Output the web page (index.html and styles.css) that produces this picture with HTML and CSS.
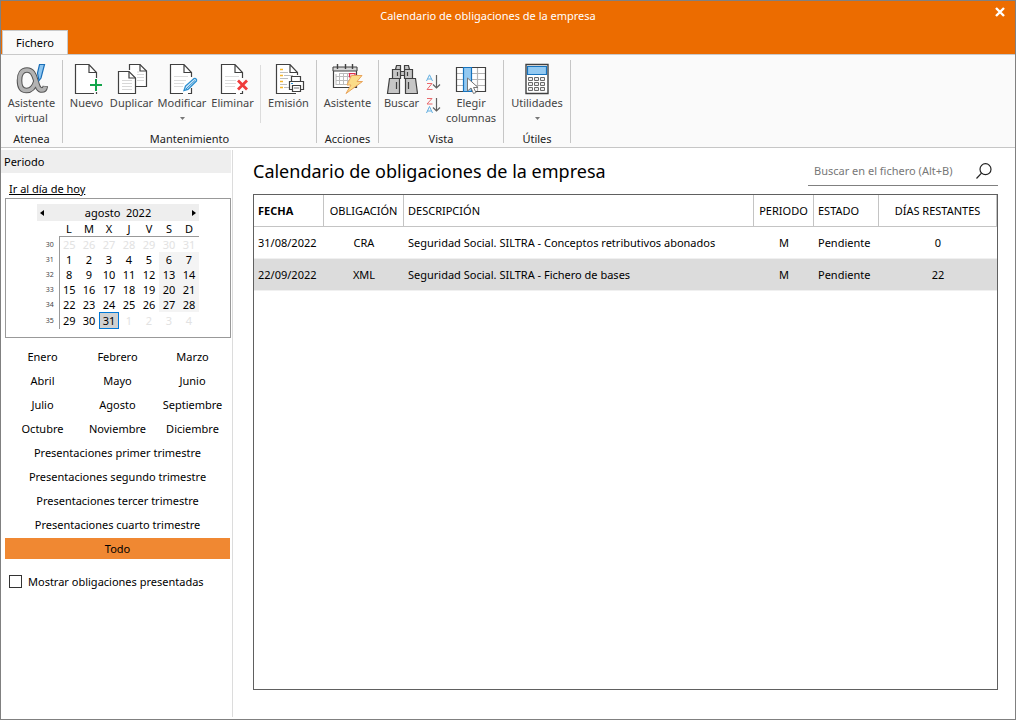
FILE: index.html
```html
<!DOCTYPE html>
<html lang="es">
<head>
<meta charset="utf-8">
<title>Calendario de obligaciones de la empresa</title>
<link rel="stylesheet" href="styles.css">
</head>
<body>
<div class="window">
  <header class="titlebar">
    <div class="titlebar-text">Calendario de obligaciones de la empresa</div>
    <button class="close" type="button" aria-label="Cerrar">
      <svg width="10" height="10" viewBox="0 0 10 10"><path d="M1 1L9 9M9 1L1 9" stroke="#fff" stroke-width="2.4"/></svg>
    </button>
    <button class="tab" type="button">Fichero</button>
  </header>

  <div class="ribbon">
    <section class="group group-narrow">
      <div class="tools">
        <button class="tool tool-fill" type="button">
          <svg width="32" height="32" viewBox="0 0 32 32" fill="none">
            <path d="M20 18C18 25 15 27.500 10.500 27.500C5.500 27.500 3.500 24 3.500 17.500C3.500 11 6 7 11 7C16 7 18 11 20 18C21.500 24 22.500 27 26 27C28 27 29 25.500 29.300 23" stroke="#555" stroke-width="5.600"/>
            <path d="M20 18C18 25 15 27.500 10.500 27.500C5.500 27.500 3.500 24 3.500 17.500C3.500 11 6 7 11 7C16 7 18 11 20 18C21.500 24 22.500 27 26 27C28 27 29 25.500 29.300 23.500" stroke="#b3b3b3" stroke-width="3.600"/>
            <path d="M23.500 1.500H28.500L25 15L23 17.500L21.500 10Z" fill="#8cc5f0" stroke="#1b6fb8" stroke-width="1.200"/>
          </svg>
          <span>Asistente<br>virtual</span>
        </button>
      </div>
      <h2 class="group-name">Atenea</h2>
    </section>

    <section class="group group-edit">
      <div class="tools">
        <button class="tool" type="button">
          <svg width="32" height="32" viewBox="0 0 32 32" fill="none">
            <path d="M22 30.500H4.500V1.500H18.500L25.500 9.500V19" fill="#fff"/>
            <path d="M23 30.500H4.500V1.500H18L25.500 9.500V15M18 1.500V9.500H25.500M25.500 29V31" stroke="#404040" stroke-width="1.200"/>
            <path d="M25 16V28M19 22H31" stroke="#12a54a" stroke-width="2"/>
          </svg>
          <span>Nuevo</span>
        </button>
        <button class="tool" type="button">
          <svg width="32" height="32" viewBox="0 0 32 32">
            <path d="M13.500 7V1.500H24L30.500 8V23.500H20" fill="#fff" stroke="#404040" stroke-width="1.200"/>
            <path d="M24 1.500V8H30.500" fill="none" stroke="#404040" stroke-width="1.200"/>
            <path d="M21 11.500H28M21 14.500H28M21 17.500H28M21 9H23" stroke="#d8d8d8"/>
            <path d="M2.500 8.500H13L19.500 15V30.500H2.500Z" fill="#fff" stroke="#404040" stroke-width="1.200"/>
            <path d="M13 8.500V15H19.500" fill="none" stroke="#404040" stroke-width="1.200"/>
            <path d="M6 17.500H16M6 20.500H16M6 23.500H16M6 26.500H16" stroke="#d8d8d8"/>
          </svg>
          <span>Duplicar</span>
        </button>
        <button class="tool tool-wide" type="button">
          <svg width="32" height="32" viewBox="0 0 32 32" fill="none">
            <path d="M4.500 1.500H18L25.500 9.500V30.500H4.500Z" fill="#fff"/>
            <path d="M17 30.500H4.500V1.500H18L25.500 9.500V14M18 1.500V9.500H25.500M25.500 25V30.500H22" stroke="#404040" stroke-width="1.200"/>
            <path d="M8 13.500H22M8 17.500H20M8 20.500H18M8 23.500H17" stroke="#dcdcdc"/>
            <path d="M18 27.500L19.500 23L28 15.500Q29.500 15 30.500 16.500V18L22 26.500Z" fill="#cfe6f7" stroke="#2b8fd0" stroke-width="1.300"/>
            <path d="M20 26L29 17.500" stroke="#2b8fd0"/>
          </svg>
          <span>Modificar</span>
          <svg class="caret" width="5" height="3" viewBox="0 0 5 3"><path d="M0 0H5L2.500 3Z" fill="#777"/></svg>
        </button>
        <button class="tool" type="button">
          <svg width="32" height="32" viewBox="0 0 32 32" fill="none">
            <path d="M4.500 1.500H18L25.500 9.500V30.500H4.500Z" fill="#fff"/>
            <path d="M19 30.500H4.500V1.500H18L25.500 9.500V15M18 1.500V9.500H25.500M25.500 28V30.500H23" stroke="#404040" stroke-width="1.200"/>
            <path d="M8 13.500H22M8 17.500H19M8 20.500H19M8 23.500H18" stroke="#dcdcdc"/>
            <path d="M21 17.500L30 26.500M30 17.500L21 26.500" stroke="#ef3b3b" stroke-width="2.800"/>
          </svg>
          <span>Eliminar</span>
        </button>
        <span class="divider"></span>
        <button class="tool" type="button">
          <svg width="32" height="32" viewBox="0 0 32 32" fill="none">
            <path d="M3.500 1.500H16.500L24.500 9.500V30.500H3.500Z" fill="#fff"/>
            <path d="M18 30.500H3.500V1.500H17L24.500 9.500V12M17 1.500V9.500H24.500M18 30.500H23" stroke="#404040" stroke-width="1.200"/>
            <path d="M7 6.500H10M7 12.500H10M7 18.500H10M7 24.500H10" stroke="#f5b52a" stroke-width="1.400"/>
            <path d="M7 9.500H15M11 12.500H20M7 15.500H15M7 21.500H14M11 24.500H16" stroke="#bdbdbd"/>
            <path d="M18.500 18V13.500H27.500V18" fill="#fff" stroke="#404040" stroke-width="1.200"/>
            <path d="M16.500 18.500H30.500V26.500H16.500Z" fill="#fff" stroke="#404040" stroke-width="1.200"/>
            <path d="M19.500 22.500H27.500V28.500H19.500Z" fill="#fff" stroke="#404040" stroke-width="1.200"/>
            <path d="M21 25H26" stroke="#777"/><path d="M18 20.500H20" stroke="#2b8fd0"/>
          </svg>
          <span>Emisión</span>
        </button>
      </div>
      <h2 class="group-name">Mantenimiento</h2>
    </section>

    <section class="group group-narrow">
      <div class="tools">
        <button class="tool tool-fill" type="button">
          <svg width="32" height="32" viewBox="0 0 32 32" fill="none">
            <path d="M1.500 4.500H24.500V24.500H1.500Z" fill="#fff" stroke="#404040" stroke-width="1.200"/>
            <path d="M1 4H25V8H1Z" fill="#d6d6d6" stroke="#404040"/>
            <path d="M5.500 1V6M13.500 1V6M20.500 1V6" stroke="#404040" stroke-width="1.400"/>
            <path d="M4 13.500H22M4 17.500H22M4 21.500H18M7.500 11V22M11.500 11V22M15.500 11V22M4 11V22M7 10.500H17" stroke="#bcbcbc"/>
            <path d="M17.500 10.500H23V14H17.500Z" fill="#f7cdd4" stroke="#df2c4c" stroke-width="1.200"/>
            <path d="M19.500 12.500H30L25 18.500H30.500L14 30.500L19 22H15Z" fill="#fbdc89" stroke="#e9a45b"/>
          </svg>
          <span>Asistente</span>
        </button>
      </div>
      <h2 class="group-name">Acciones</h2>
    </section>

    <section class="group group-view">
      <div class="tools">
        <button class="tool" type="button">
          <svg width="32" height="32" viewBox="0 0 32 32" fill="#c6c6c6" stroke="#404040" stroke-width="1.200">
            <path d="M10.500 2.500H14.500V6.500H9.500ZM18.500 2.500H22.500L23.500 6.500H18.500ZM14.500 8.500H18.500V12.500H14.500ZM6.500 6.500H14.500V15.500H6.500ZM18.500 6.500H26.500V15.500H18.500Z"/>
            <path d="M3.500 15.500H13.500V30.500H1.500ZM19.500 15.500H29.500L31.500 30.500H19.500Z"/>
            <path d="M11.500 9V13M21.500 9V13M10.500 19V26M22.500 19V26"/>
          </svg>
          <span>Buscar</span>
        </button>
        <div class="sorters">
          <button class="sorter" type="button" aria-label="Orden ascendente">
            <svg width="16" height="17" viewBox="0 0 16 17" fill="none">
              <path d="M1.500 7L4.500 .8L7.500 7M2.500 5H6.500" stroke="#61aee0"/>
              <path d="M2 9.500H7L2 15.500H7.500" stroke="#e9696d"/>
              <path d="M11.500 1V14M8 10.500L11.500 14L15 10.500" stroke="#606060" stroke-width="1.200"/>
            </svg>
          </button>
          <button class="sorter" type="button" aria-label="Orden descendente">
            <svg width="16" height="17" viewBox="0 0 16 17" fill="none">
              <path d="M2 1.500H7L2 7H7.500" stroke="#e9696d"/>
              <path d="M1.500 16L4.500 9.500L7.500 16M2.500 14H6.500" stroke="#61aee0"/>
              <path d="M11.500 1V14M8 10.500L11.500 14L15 10.500" stroke="#606060" stroke-width="1.200"/>
            </svg>
          </button>
        </div>
        <button class="tool" type="button">
          <svg width="32" height="32" viewBox="0 0 32 32" fill="none">
            <path d="M1.500 4.500H30.500V28.500H1.500Z" fill="#fff"/>
            <path d="M2 10.500H30M2 16.500H30M2 22.500H30M22.500 5V28" stroke="#b5b5b5" stroke-width="1.200"/>
            <path d="M1.500 4.500H30.500V28.500H1.500Z" stroke="#404040" stroke-width="1.200"/>
            <path d="M8.500 4.500H16.500V28.500H8.500Z" fill="#93c9f1" stroke="#1673be" stroke-width="1.200"/>
            <path d="M12.500 15V28L16 25L18.500 30.500L21 29.500L18.500 24.500H23Z" fill="#fff" stroke="#777"/>
          </svg>
          <span>Elegir<br>columnas</span>
        </button>
      </div>
      <h2 class="group-name">Vista</h2>
    </section>

    <section class="group group-utils">
      <div class="tools">
        <button class="tool tool-fill" type="button">
          <svg width="32" height="32" viewBox="0 0 32 32" fill="none">
            <path d="M5 1.500H27V30.500H5Z" fill="#fff" stroke="#404040" stroke-width="1.400"/>
            <path d="M6.500 3.500H25.500V11.500H6.500Z" fill="#93c9f1" stroke="#1673be" stroke-width="1.200"/>
            <path d="M7.500 14.500H11.500V17.500H7.500ZM13.500 14.500H17.500V17.500H13.500ZM19.500 14.500H23.500V17.500H19.500ZM7.500 19.500H11.500V22.500H7.500ZM13.500 19.500H17.500V22.500H13.500ZM19.500 19.500H23.500V22.500H19.500ZM7.500 24.500H11.500V27.500H7.500ZM13.500 24.500H17.500V27.500H13.500ZM19.500 24.500H23.500V27.500H19.500Z" fill="#eee" stroke="#6a6a6a"/>
          </svg>
          <span>Utilidades</span>
          <svg class="caret" width="5" height="3" viewBox="0 0 5 3"><path d="M0 0H5L2.500 3Z" fill="#777"/></svg>
        </button>
      </div>
      <h2 class="group-name">Útiles</h2>
    </section>
  </div>

  <div class="content">
    <aside class="sidebar">
      <h2 class="sidebar-title">Periodo</h2>
      <a class="today-link" href="#hoy">Ir al día de hoy</a>
      <div class="calendar">
        <div class="calendar-head">
          <button type="button" aria-label="Mes anterior"><svg width="4" height="6" viewBox="0 0 4 6"><path d="M4 0V6L0 3Z"/></svg></button>
          <span>agosto&nbsp; 2022</span>
          <button type="button" aria-label="Mes siguiente"><svg width="4" height="6" viewBox="0 0 4 6"><path d="M0 0V6L4 3Z"/></svg></button>
        </div>
        <table class="days">
          <thead><tr><td></td><th>L</th><th>M</th><th>X</th><th>J</th><th>V</th><th>S</th><th>D</th></tr></thead>
          <tbody>
            <tr class="other"><th>30</th><td>25</td><td>26</td><td>27</td><td>28</td><td>29</td><td>30</td><td>31</td></tr>
            <tr><th>31</th><td>1</td><td>2</td><td>3</td><td>4</td><td>5</td><td class="weekend">6</td><td class="weekend">7</td></tr>
            <tr><th>32</th><td>8</td><td>9</td><td>10</td><td>11</td><td>12</td><td class="weekend">13</td><td class="weekend">14</td></tr>
            <tr><th>33</th><td>15</td><td>16</td><td>17</td><td>18</td><td>19</td><td class="weekend">20</td><td class="weekend">21</td></tr>
            <tr><th>34</th><td>22</td><td>23</td><td>24</td><td>25</td><td>26</td><td class="weekend">27</td><td class="weekend">28</td></tr>
            <tr class="last"><th>35</th><td>29</td><td>30</td><td class="selected">31</td><td class="faded">1</td><td class="faded">2</td><td class="faded">3</td><td class="faded">4</td></tr>
          </tbody>
        </table>
      </div>
      <div class="periods">
        <button type="button">Enero</button><button type="button">Febrero</button><button type="button">Marzo</button>
        <button type="button">Abril</button><button type="button">Mayo</button><button type="button">Junio</button>
        <button type="button">Julio</button><button type="button">Agosto</button><button type="button">Septiembre</button>
        <button type="button">Octubre</button><button type="button">Noviembre</button><button type="button">Diciembre</button>
        <button class="full" type="button">Presentaciones primer trimestre</button>
        <button class="full" type="button">Presentaciones segundo trimestre</button>
        <button class="full" type="button">Presentaciones tercer trimestre</button>
        <button class="full" type="button">Presentaciones cuarto trimestre</button>
        <button class="full active" type="button">Todo</button>
      </div>
      <label class="check"><input type="checkbox">Mostrar obligaciones presentadas</label>
    </aside>

    <main class="main">
      <div class="main-head">
        <h1>Calendario de obligaciones de la empresa</h1>
        <div class="search">
          <input type="text" placeholder="Buscar en el fichero (Alt+B)" aria-label="Buscar en el fichero">
          <button type="button" aria-label="Buscar">
            <svg width="16" height="16" viewBox="0 0 16 16" fill="none" stroke="#222" stroke-width="1.200"><circle cx="9.500" cy="6.200" r="5.500"/><path d="M5.500 10.200L.5 15.500"/></svg>
          </button>
        </div>
      </div>
      <div class="grid">
        <table class="records">
          <colgroup><col class="c-date"><col class="c-type"><col><col class="c-period"><col class="c-state"><col class="c-left"></colgroup>
          <thead><tr><th class="sorted">FECHA</th><th class="mid">OBLIGACIÓN</th><th>DESCRIPCIÓN</th><th class="mid">PERIODO</th><th>ESTADO</th><th class="mid">DÍAS RESTANTES</th></tr></thead>
          <tbody>
            <tr><td>31/08/2022</td><td class="mid">CRA</td><td>Seguridad Social. SILTRA - Conceptos retributivos abonados</td><td class="mid">M</td><td>Pendiente</td><td class="mid">0</td></tr>
            <tr class="current"><td>22/09/2022</td><td class="mid">XML</td><td>Seguridad Social. SILTRA - Fichero de bases</td><td class="mid">M</td><td>Pendiente</td><td class="mid">22</td></tr>
          </tbody>
        </table>
      </div>
    </main>
  </div>
</div>
</body>
</html>
```

FILE: styles.css
```css
* { box-sizing: border-box; }

body {
  margin: 0;
  font: 11px/15px "Noto Sans", "Open Sans", sans-serif;
  color: #000;
  background: #fff;
}

button, input {
  font: inherit;
  color: inherit;
  margin: 0;
  padding: 0;
  border: 0;
  background: none;
}

h1, h2 { margin: 0; font-weight: 400; font-size: inherit; }

svg { display: block; }

.window {
  display: flex;
  flex-direction: column;
  min-height: 100vh;
  border: 1px solid #808080;
}

/* Title bar and tab */
.titlebar {
  display: grid;
  grid-template-columns: 1fr 30px;
  grid-template-rows: 29px 24px;
  background: #ec6c00;
}
.titlebar-text { padding-right: 10px; line-height: 30px; text-align: center; color: #fff; }
.close { display: grid; place-items: center; height: 22px; }
.tab {
  grid-column: 1 / -1;
  justify-self: start;
  width: 66px;
  margin-left: 1px;
  background: #fafafa;
  border: 1px solid #c9c9c9;
  border-bottom: 0;
}

/* Ribbon */
.ribbon {
  display: flex;
  height: 94px;
  padding: 5px 0 4px;
  background: #fafafa;
  border-top: 1px solid #c9c9c9;
  border-bottom: 1px solid #c6c6c6;
}
.group {
  display: flex;
  flex-direction: column;
  justify-content: space-between;
  border-right: 1px solid #c6c6c6;
}
.group-narrow { width: 62px; }
.group-edit { width: 254px; }
.group-view { width: 125px; }
.group-utils { width: 67px; }
.group-name { margin-bottom: -3px; text-align: center; color: #222; }
.tools { display: flex; justify-content: center; padding-top: 3px; }
.group-edit .tools { padding-right: 4px; }
.group-view .tools { justify-content: flex-start; }
.tool {
  display: flex;
  flex-direction: column;
  align-items: center;
  min-width: 45px;
  color: #444;
}
.tool-wide { min-width: 56px; }
.tool-fill { flex: 1; }
.caret { margin-top: 7px; }
.divider { width: 1px; height: 58px; margin: 2px 5px 0; background: #dcdcdc; }
.sorters { display: flex; flex-direction: column; gap: 6px; padding: 11px 5px 0 1px; }

/* Page body */
.content { display: flex; flex: 1; padding: 2px 0; }

.sidebar {
  flex: none;
  width: 232px;
  border-right: 1px solid #dcdcdc;
}
.sidebar-title { height: 23px; margin-right: 1px; padding-left: 3px; line-height: 23px; background: #eee; }
.today-link { display: block; width: fit-content; margin: 8px 8px 2px; color: #000; }

.calendar {
  height: 140px;
  margin: 0 1px 0 4px;
  padding: 5px 31px;
  border: 1px solid #999;
}
.calendar-head { display: flex; justify-content: space-between; align-items: center; height: 17px; padding: 0 3px; background: #eee; }
.days { width: 100%; table-layout: fixed; border-collapse: collapse; text-align: center; }
.days th, .days td { width: 20px; height: 15px; padding: 0; font-weight: 400; line-height: 15px; }
.days tr > :first-child { width: 22px; }
.days thead th { border-bottom: 1px solid #999; }
.days tbody th { padding-left: 4px; font-size: 7px; color: #444; border-right: 1px solid #999; }
.days .other td, .days .faded { color: #e2e2e2; }
.days .weekend { background: #f4f4f4; }
.days .last > * { height: 17px; }
.days .selected { background: #d0d0d0; outline: 1px solid #0078d7; outline-offset: -1px; }

.periods { display: grid; grid-template-columns: repeat(3, 1fr); row-gap: 3px; margin: 8px 2px 0 4px; }
.periods button { height: 21px; }
.periods .full { grid-column: 1 / -1; }
.periods .active { background: #f08832; }

.check { display: flex; align-items: center; gap: 6px; margin: 15px 8px; }
.check input { appearance: none; width: 13px; height: 13px; border: 1px solid #333; background: #fff; }

/* Main area */
.main { display: flex; flex: 1; flex-direction: column; min-width: 0; padding: 0 17px 27px 20px; }
.main-head { display: flex; justify-content: space-between; height: 36px; margin-bottom: 8px; }
.main-head h1 { font-size: 18px; line-height: 42px; }
.search { display: flex; align-items: center; gap: 4px; width: 190px; padding: 7px 6px 0; border-bottom: 1px solid #808080; }
.search input { flex: 1; min-width: 0; padding-bottom: 2px; outline: 0; }
.search input::placeholder { color: #777; opacity: 1; }

.grid { flex: 1; border: 1px solid #606060; }
.records { width: 100%; table-layout: fixed; border-collapse: separate; border-spacing: 0; text-align: left; }
.records th, .records td { height: 32px; padding: 0 4px; white-space: nowrap; border-bottom: 1px solid #f0f0f0; }
.records th { font-weight: 400; border-right: 1px solid #c4c4c4; border-bottom-color: #c4c4c4; }
.records .sorted { font-weight: 700; }
.records .mid { text-align: center; }
.records .current { background: #dcdcdc; }
.c-date { width: 70px; }
.c-type { width: 80px; }
.c-period { width: 60px; }
.c-state { width: 65px; }
.c-left { width: 118px; }
```
